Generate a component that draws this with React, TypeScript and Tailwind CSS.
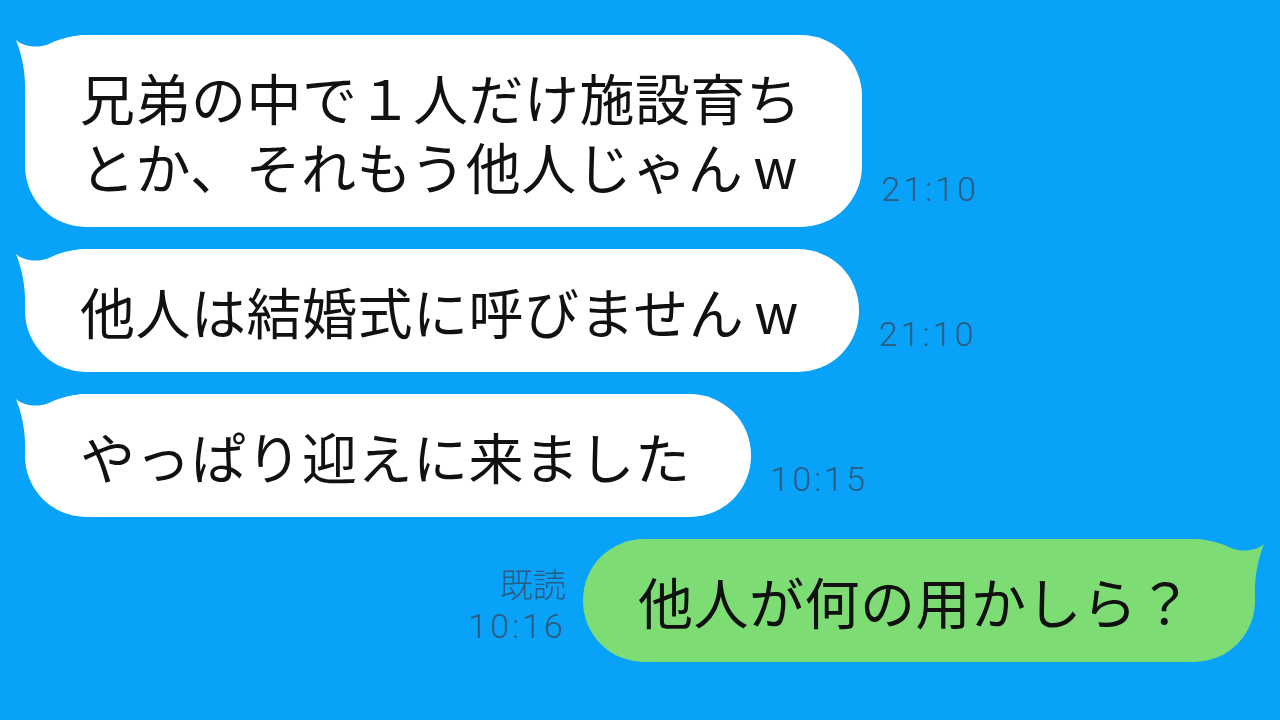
import React from "react";

const jp = { fontFamily: '"Noto Sans CJK JP", "Noto Sans", sans-serif' };
const tm = { fontFamily: 'Roboto, "Noto Sans CJK JP", sans-serif' };

function Tail({ color, flip }: { color: string; flip?: boolean }) {
  return (
    <svg
      width="72"
      height="64"
      viewBox="0 0 72 64"
      className={
        flip
          ? "absolute -right-[10px] top-0 -scale-x-100"
          : "absolute -left-[10px] top-0"
      }
    >
      <path
        d="M1,5 C8,11 20,14 34,9 C42,5 52,1 72,0 L72,64 L10,64 C11,45 9,25 1,5 Z"
        fill={color}
      />
    </svg>
  );
}

function Time({ children }: { children: React.ReactNode }) {
  return (
    <div
      className="text-[34px] leading-[36px] tracking-[3px] font-light text-[#2b5c82] mb-[20px]"
      style={tm}
    >
      {children}
    </div>
  );
}

function W() {
  return <span className="ml-[10px]">w</span>;
}

function Left({ lines, time }: { lines: React.ReactNode[]; time: string }) {
  return (
    <div className="flex items-end gap-[20px]">
      <div className="relative">
        <Tail color="#ffffff" />
        <div
          className="relative bg-white rounded-[61px] pl-[55px] pr-[60px] py-[27px] text-[55px] leading-[69px] tracking-[0.5px] text-[#111] whitespace-nowrap"
          style={jp}
        >
          {lines.map((l, i) => (
            <div key={i}>{l}</div>
          ))}
        </div>
      </div>
      <Time>{time}</Time>
    </div>
  );
}

export default function App() {
  return (
    <div className="w-[1280px] h-[720px] bg-[#09a2f9] overflow-hidden pt-[35px] pl-[25px] pr-[25px] flex flex-col gap-[22px]">
      <Left
        lines={[
          "兄弟の中で１人だけ施設育ち",
          <>
            とか、それもう他人じゃん
            <W />
          </>,
        ]}
        time="21:10"
      />
      <Left
        lines={[
          <>
            他人は結婚式に呼びません
            <W />
          </>,
        ]}
        time="21:10"
      />
      <Left lines={["やっぱり迎えに来ました"]} time="10:15" />
      <div className="flex items-end justify-end gap-[17px]">
        <div className="flex flex-col items-end mb-[14px] text-[#2b5c82]">
          <div className="text-[33px] leading-[42px] font-light" style={jp}>
            既読
          </div>
          <div className="text-[34px] leading-[44px] tracking-[3px] font-light" style={tm}>
            10:16
          </div>
        </div>
        <div className="relative">
          <Tail color="#7edc74" flip />
          <div
            className="relative bg-[#7edc74] rounded-[61px] pl-[55px] pr-[62px] py-[27px] text-[55px] leading-[69px] tracking-[0.5px] text-[#111] whitespace-nowrap"
            style={jp}
          >
            他人が何の用かしら？
          </div>
        </div>
      </div>
    </div>
  );
}
